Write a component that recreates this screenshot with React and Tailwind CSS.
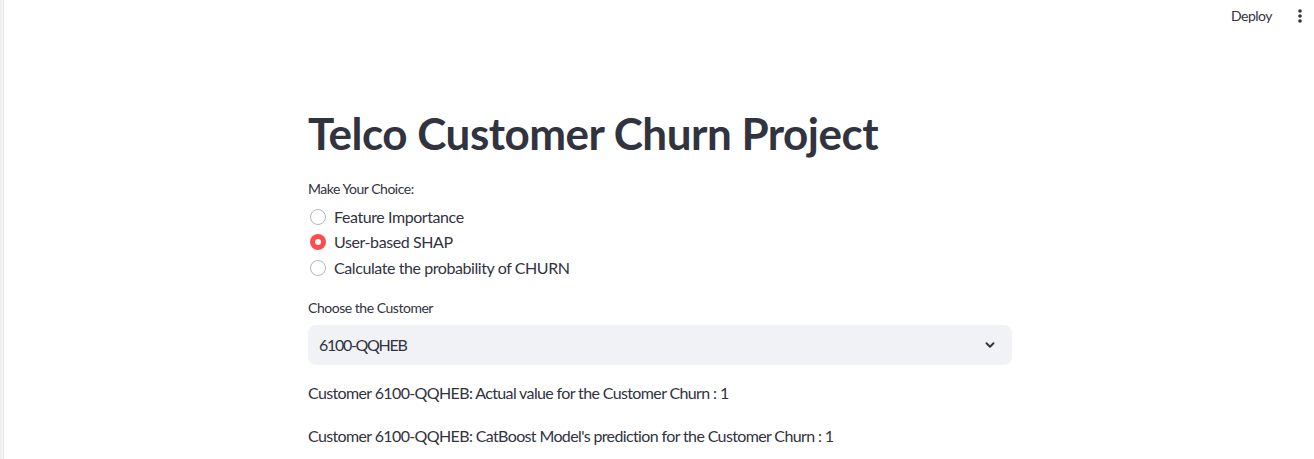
import React from "react";

function Radio({ checked, label }) {
  return (
    <label className="flex items-center h-[25.5px]">
      {checked ? (
        <span className="w-4 h-4 rounded-full bg-[#ff4b4b] flex items-center justify-center ml-[2px]">
          <span className="w-[6px] h-[6px] rounded-full bg-white" />
        </span>
      ) : (
        <span className="w-4 h-4 rounded-full border border-[#b5b6bb] bg-white ml-[2px]" />
      )}
      <span className="ml-2 text-[16px] text-[#31333f] tracking-[-0.42px]">{label}</span>
    </label>
  );
}

export default function App() {
  return (
    <div
      className="relative w-[1314px] h-[459px] bg-white overflow-hidden flex"
      style={{ fontFamily: '"Source Sans Pro", Lato, "Noto Sans", sans-serif' }}
    >
      <div className="w-[4px] h-full bg-gradient-to-r from-[#ececec] to-[#f8f8f8] border-r border-[#e6e6e6] shrink-0" />
      <div className="flex-1 flex flex-col">
        <div className="h-[31px] flex items-center justify-end pr-[8px]">
          <span className="text-[14px] text-[#31333f] mr-[25px] tracking-[-0.5px]">Deploy</span>
          <svg width="6" height="16" viewBox="0 0 6 16" className="mr-[3px]">
            <circle cx="3" cy="3" r="1.8" fill="#31333f" />
            <circle cx="3" cy="8" r="1.8" fill="#31333f" />
            <circle cx="3" cy="13" r="1.8" fill="#31333f" />
          </svg>
        </div>
        <div className="ml-[304px] w-[704px] flex flex-col">
          <h1 className="mt-[76px] text-[44px] leading-[52px] font-bold text-[#31333f] tracking-[-0.5px]">
            Telco Customer Churn Project
          </h1>
          <div className="mt-[21px] text-[14px] leading-[18px] text-[#31333f] tracking-[-0.5px]">Make Your Choice:</div>
          <div className="mt-[6px] flex flex-col">
            <Radio label="Feature Importance" />
            <Radio checked label="User-based SHAP" />
            <Radio label="Calculate the probability of CHURN" />
          </div>
          <div className="mt-[18px] text-[14px] leading-[18px] text-[#31333f] tracking-[-0.47px]">Choose the Customer</div>
          <div className="mt-[8px] h-[40px] rounded-[8px] bg-[#f0f2f6] flex items-center justify-between pl-[11px] pr-[15px]">
            <span className="text-[16px] text-[#31333f] tracking-[-1.3px]">6100-QQHEB</span>
            <svg width="14" height="14" viewBox="0 0 24 24" fill="none" stroke="#31333f" strokeWidth="3.2" strokeLinecap="round" strokeLinejoin="round">
              <path d="M6 9l6 6 6-6" />
            </svg>
          </div>
          <p className="mt-[16px] text-[16px] leading-[24px] text-[#31333f] tracking-[-0.63px]">
            Customer 6100-QQHEB: Actual value for the Customer Churn : 1
          </p>
          <p className="mt-[19px] text-[16px] leading-[24px] text-[#31333f] tracking-[-0.63px]">
            Customer 6100-QQHEB: CatBoost Model's prediction for the Customer Churn : 1
          </p>
        </div>
      </div>
    </div>
  );
}
